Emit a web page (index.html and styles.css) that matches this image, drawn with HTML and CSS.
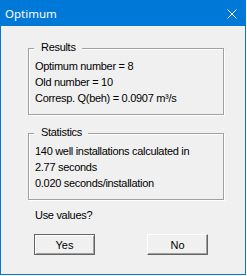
FILE: index.html
```html
<!DOCTYPE html>
<html lang="en">
<head>
  <meta charset="UTF-8">
  <title>Optimum</title>
  <link rel="stylesheet" href="styles.css">
</head>
<body>
  <div class="window">
    <div class="title-bar">
      <span class="title">Optimum</span>
      <svg class="close-icon" width="10" height="10" viewBox="0 0 10 10">
        <path d="M0.5 0.5 L9.5 9.5 M9.5 0.5 L0.5 9.5" stroke="#fff" stroke-width="1" fill="none"/>
      </svg>
    </div>

    <div class="content">
      <div class="group">
        <span class="group-label">Results</span>
        <div class="line">Optimum number = 8</div>
        <div class="line">Old number = 10</div>
        <div class="line">Corresp. Q(beh) = 0.0907 m³/s</div>
      </div>

      <div class="group stats">
        <span class="group-label">Statistics</span>
        <div class="line">140 well installations calculated in</div>
        <div class="line">2.77 seconds</div>
        <div class="line">0.020 seconds/installation</div>
      </div>

      <div class="question">Use values?</div>

      <div class="buttons">
        <button class="btn default">Yes</button>
        <button class="btn">No</button>
      </div>
    </div>
  </div>
</body>
</html>
```

FILE: styles.css
```css
* {
  box-sizing: border-box;
  margin: 0;
  padding: 0;
}

body {
  background: #fff;
  font-family: 'Liberation Sans', Arial, sans-serif;
  font-size: 11px;
  color: #000;
}

.window {
  width: 246px;
  height: 275px;
  border: 1px solid #0078d7;
  background: #f0f0f0;
  display: flex;
  flex-direction: column;
}

.title-bar {
  height: 25px;
  background: #0078d7;
  color: #fff;
  display: flex;
  align-items: center;
  justify-content: space-between;
  padding: 0 8px 0 4px;
}

.title {
  font-family: 'Noto Sans', sans-serif;
  font-size: 11.5px;
  line-height: 16px;
}

.close-icon {
  display: block;
  margin-top: 1px;
}

.content {
  flex: 1;
  padding: 22px 0 0 27px;
}

.group {
  position: relative;
  width: 196px;
  border: 1px solid #a0a0a0;
  box-shadow: inset 1px 1px 0 #fff, 1px 1px 0 #fff;
  padding: 9px 6px 8px 6px;
}

.group.stats {
  margin-top: 18px;
}

.group-label {
  position: absolute;
  top: -8px;
  left: 5px;
  padding: 0 6px 0 7px;
  line-height: 13px;
  background: #f0f0f0;
  letter-spacing: -0.3px;
}

.line,
.question {
  line-height: 16px;
  letter-spacing: -0.3px;
  white-space: nowrap;
}

.question {
  margin: 7px 0 0 7px;
}

.buttons {
  display: flex;
  justify-content: space-between;
  width: 174px;
  margin: 11px 0 0 6px;
}

.btn {
  width: 61px;
  height: 21px;
  font-family: 'Liberation Sans', Arial, sans-serif;
  font-size: 11px;
  color: #000;
  background: #f0f0f0;
  border: 1px solid;
  border-color: #fff #646464 #646464 #fff;
  box-shadow: inset -1px -1px 0 #a0a0a0;
}

.btn.default {
  border-color: #646464;
  box-shadow: inset 1px 1px 0 #fff, inset -1px -1px 0 #a0a0a0;
}
```
